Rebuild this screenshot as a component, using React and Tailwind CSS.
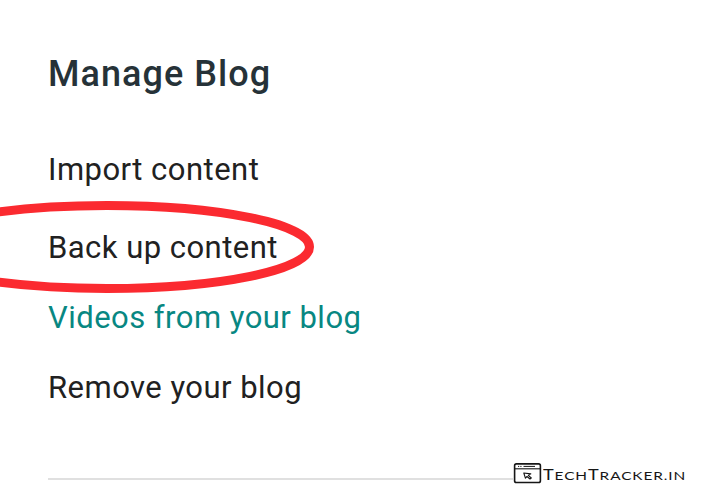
function BrowserIcon() {
  return (
    <svg className="h-[22px] w-[30px] shrink-0 bg-white" viewBox="0 0 30 22" fill="none" stroke="#161616">
      <rect x="1.6" y="0.9" width="25.8" height="18.6" rx="1.8" strokeWidth="1.6" />
      <path d="M1.6 5.8h25.6" strokeWidth="1.1" />
      <path d="M5 3.4h1.2M7.3 3.4h1.2M10.5 3.4h11.5" strokeWidth="1" />
      <path d="M10.8 10l7 .9-2.5 1.5 3 2.6-1.3 1-3-2.5-1.6 1.7z" strokeWidth="1.1" strokeLinejoin="round" />
    </svg>
  );
}

export default function App() {
  return (
    <main className="relative h-[495px] w-[720px] overflow-hidden bg-white px-12 pt-[54px] font-[Roboto,sans-serif] text-[#212121]">
      <h1 className="h-10 whitespace-nowrap text-[36px] font-medium leading-10 tracking-[1.05px] text-[#263238]">Manage Blog</h1>
      <nav className="mt-[56px] flex flex-col whitespace-nowrap text-[31px] leading-10 tracking-[0.47px]">
        <a className="h-10">Import content</a>
        <a className="mt-[38px] h-10">Back up content</a>
        <a className="mt-[30px] h-10 text-[#088782]">Videos from your blog</a>
        <a className="mt-[30px] h-10">Remove your blog</a>
      </nav>
      <svg className="absolute left-0 top-[195px] h-[105px] w-[330px]" viewBox="0 195 330 105" fill="none">
        <ellipse cx="107" cy="247" rx="202.5" ry="41.5" stroke="#fb2a30" strokeWidth="9" />
      </svg>
      <footer className="mt-[54px] flex h-[22px] items-center">
        <div className="mt-[12px] h-[2px] w-[465px] shrink-0 bg-[#e0e0e0]" />
        <div className="mt-[1px] flex h-[22px] items-center">
          <BrowserIcon />
          <div className="mt-[4px] origin-left scale-x-[1.25] whitespace-nowrap font-[Lato,sans-serif] text-[14.5px] leading-[18px] tracking-[0.72px] text-[#161616]">
            T<span className="text-[12.3px]">ECH</span>T<span className="text-[12.3px]">RACKER.IN</span>
          </div>
        </div>
      </footer>
    </main>
  );
}
